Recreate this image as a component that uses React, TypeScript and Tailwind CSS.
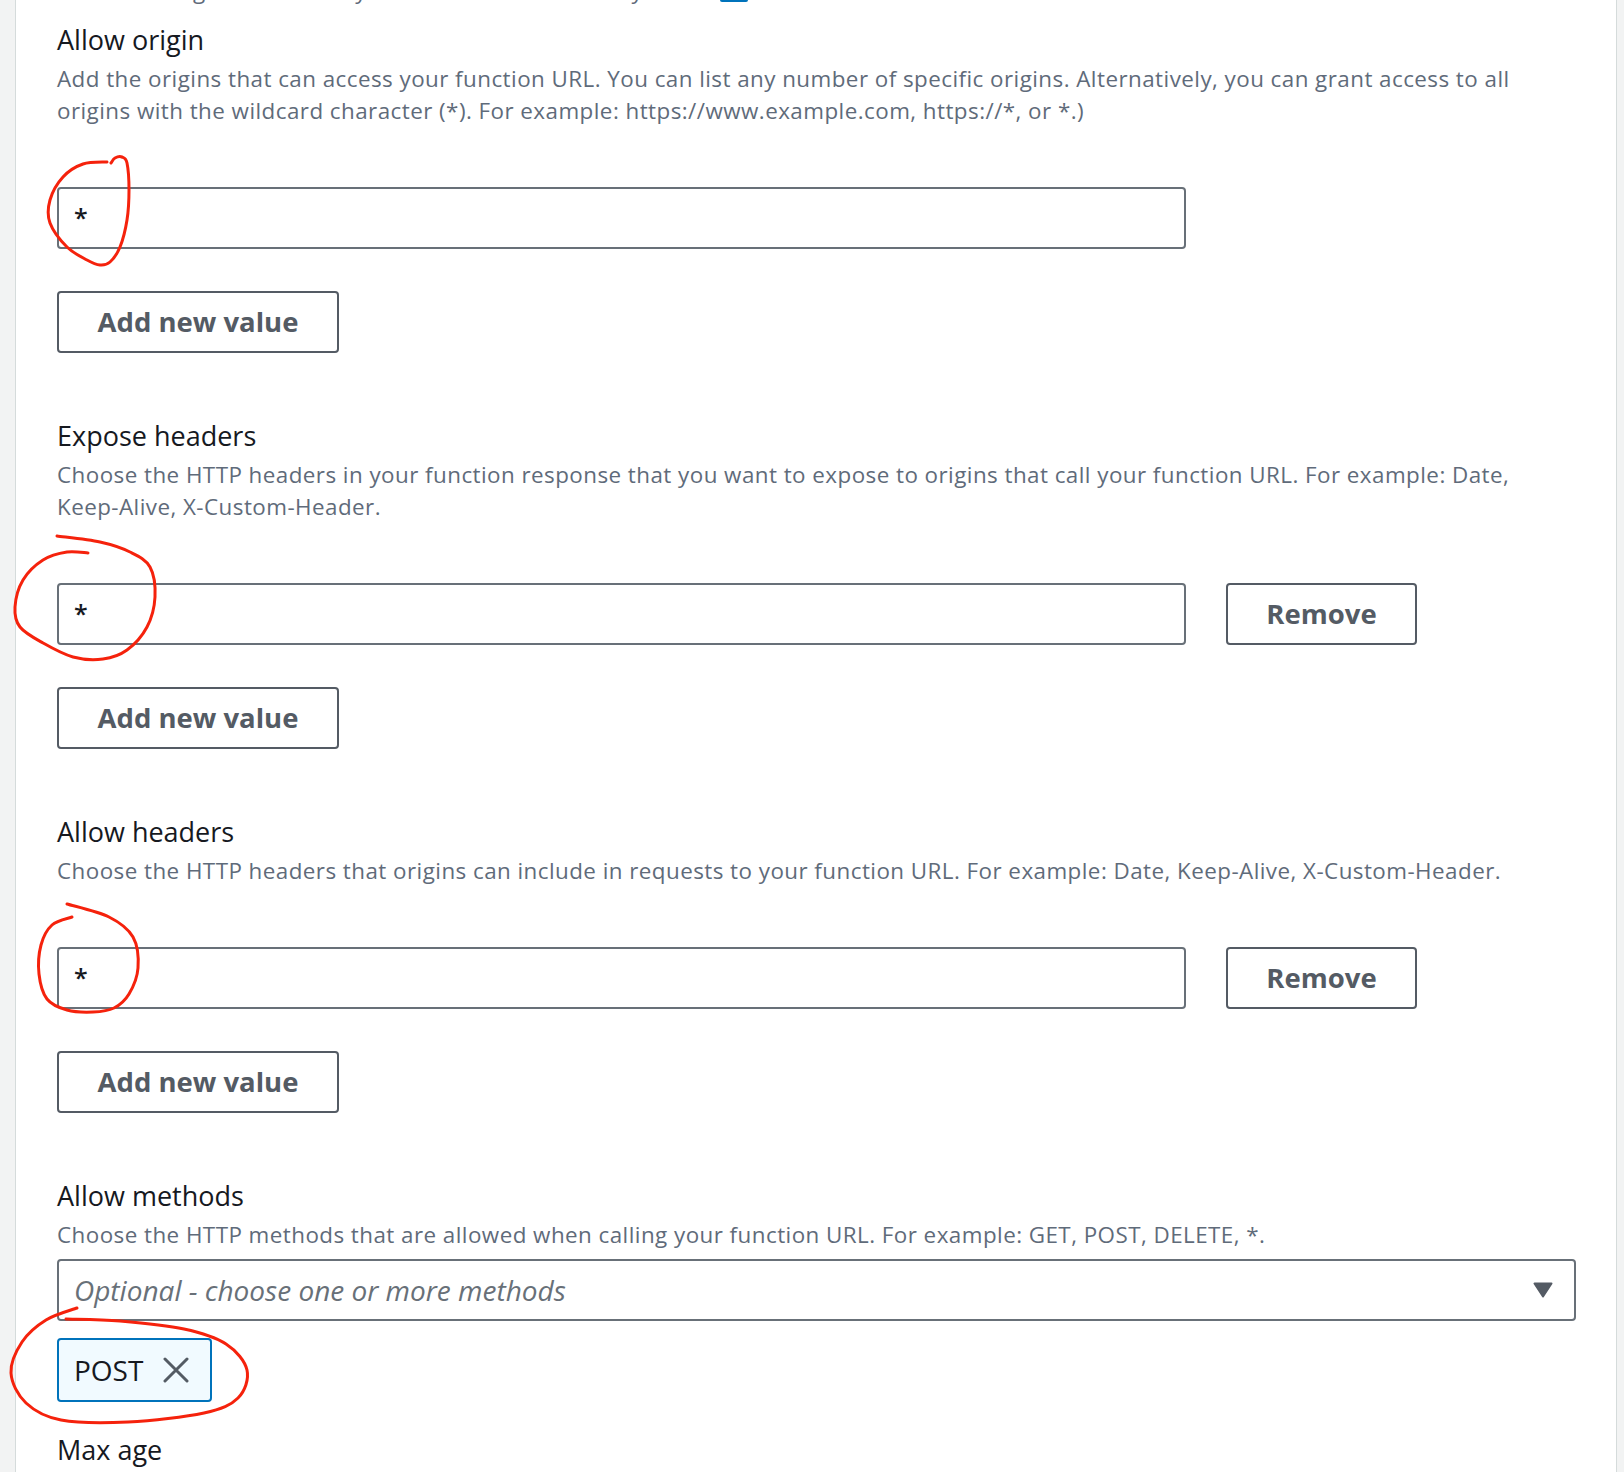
type Pt = [number, number];

// smooth open curve through hand-picked points (catmull-rom -> bezier)
function toPath(pts: Pt[]) {
  let d = `M${pts[0][0]},${pts[0][1]}`;
  for (let i = 0; i < pts.length - 1; i++) {
    const p0 = pts[i - 1] ?? pts[i];
    const p1 = pts[i];
    const p2 = pts[i + 1];
    const p3 = pts[i + 2] ?? p2;
    const c1 = [p1[0] + (p2[0] - p0[0]) / 6, p1[1] + (p2[1] - p0[1]) / 6];
    const c2 = [p2[0] - (p3[0] - p1[0]) / 6, p2[1] - (p3[1] - p1[1]) / 6];
    d += ` C${c1[0]},${c1[1]} ${c2[0]},${c2[1]} ${p2[0]},${p2[1]}`;
  }
  return d;
}

const scribbles: Pt[][] = [
  [[107, 162], [83, 164], [63, 177], [50, 200], [50, 223], [67, 247], [87, 260], [100, 265], [110, 262], [120, 247], [127, 220], [129, 190], [127, 163], [122, 157], [115, 158], [111, 163]],
  [[88, 553], [67, 552], [43, 560], [23, 580], [15, 607], [20, 627], [43, 643], [73, 657], [103, 659], [127, 650], [147, 627], [155, 597], [150, 567], [130, 552], [100, 542], [57, 536]],
  [[67, 904], [109, 917], [133, 937], [138, 968], [129, 994], [114, 1008], [93, 1012], [67, 1010], [47, 999], [39, 974], [41, 945], [52, 925], [72, 917]],
  [[77, 1308], [46, 1320], [22, 1342], [11, 1373], [26, 1403], [61, 1420], [128, 1422], [204, 1413], [238, 1398], [247, 1370], [226, 1344], [184, 1329], [120, 1321], [66, 1319]],
];

function Heading({ children }: { children: React.ReactNode }) {
  return <div className="text-[27px] leading-[36px] text-[#16191f]">{children}</div>;
}

function Desc({ lines }: { lines: string[] }) {
  return (
    <div className="mt-[5px] text-[22.4px] leading-[32px] tracking-[0.45px] text-[#5f6b7a]">
      {lines.map((l) => (
        <div key={l} className="whitespace-nowrap">{l}</div>
      ))}
    </div>
  );
}

function OutlineButton({ label, width }: { label: string; width: string }) {
  return (
    <button
      className={`${width} h-[62px] shrink-0 rounded-[4px] border-2 border-[#545b64] bg-white text-[27.5px] font-bold text-[#545b64]`}
    >
      {label}
    </button>
  );
}

function ValueField({ removable }: { removable?: boolean }) {
  return (
    <>
      <div className="mt-[60px] flex items-center gap-[40px]">
        <div className="flex h-[62px] w-[1129px] items-center rounded-[4px] border-2 border-[#687078] px-[15px] text-[25px] font-semibold text-[#16191f]">
          *
        </div>
        {removable && <OutlineButton label="Remove" width="w-[191px]" />}
      </div>
      <div className="mt-[42px]">
        <OutlineButton label="Add new value" width="w-[282px]" />
      </div>
    </>
  );
}

export default function App() {
  return (
    <div className="relative flex h-[1472px] w-[1624px] overflow-hidden bg-white font-['Open_Sans',sans-serif]">
      <div className="w-[16px] shrink-0 border-r border-[#d5dbdb] bg-[#f2f3f3]" />
      <main className="flex-1 pl-[41px] pr-[40px]">
        {/* tail of the line above, cut by the viewport */}
        <div className="h-[6px] overflow-hidden">
          <div className="-mt-[24px] flex items-start">
            <span className="w-[663px] overflow-hidden whitespace-nowrap text-[22.4px] leading-[30px] text-[#5f6b7a]">
              Use CORS to grant access to your function URL from any domain.
            </span>
            <span className="mt-[12px] h-[14px] w-[28px] rounded-[2px] bg-[#0073bb]" />
          </div>
        </div>

        <div className="mt-[16px]">
          <Heading>Allow origin</Heading>
          <Desc
            lines={[
              'Add the origins that can access your function URL. You can list any number of specific origins. Alternatively, you can grant access to all',
              'origins with the wildcard character (*). For example: https://www.example.com, https://*, or *.)',
            ]}
          />
          <ValueField />
        </div>

        <div className="mt-[65px]">
          <Heading>Expose headers</Heading>
          <Desc
            lines={[
              'Choose the HTTP headers in your function response that you want to expose to origins that call your function URL. For example: Date,',
              'Keep-Alive, X-Custom-Header.',
            ]}
          />
          <ValueField removable />
        </div>

        <div className="mt-[65px]">
          <Heading>Allow headers</Heading>
          <Desc
            lines={[
              'Choose the HTTP headers that origins can include in requests to your function URL. For example: Date, Keep-Alive, X-Custom-Header.',
            ]}
          />
          <ValueField removable />
        </div>

        <div className="mt-[65px]">
          <Heading>Allow methods</Heading>
          <Desc lines={['Choose the HTTP methods that are allowed when calling your function URL. For example: GET, POST, DELETE, *.']} />
          <div className="mt-[8px] flex h-[62px] items-center justify-between rounded-[4px] border-2 border-[#687078] pl-[15px] pr-[21px]">
            <span className="text-[28px] italic text-[#687078]">Optional - choose one or more methods</span>
            <svg width="20" height="16" viewBox="0 0 20 16">
              <path d="M1.5 1.5 H18.5 L10 14.5 Z" fill="#545b64" stroke="#545b64" strokeWidth="2" strokeLinejoin="round" />
            </svg>
          </div>
          <div className="mt-[17px] flex h-[64px] w-[155px] items-center gap-[20px] rounded-[4px] border-2 border-[#0073bb] bg-[#f1faff] pl-[15px]">
            <span className="text-[28px] text-[#16191f]">POST</span>
            <svg width="26" height="26" viewBox="0 0 26 26">
              <path d="M2 2 L24 24 M24 2 L2 24" stroke="#545b64" strokeWidth="3" strokeLinecap="round" />
            </svg>
          </div>
          <div className="mt-[30px]">
            <Heading>Max age</Heading>
          </div>
        </div>
      </main>
      <div className="w-[8px] shrink-0 border-l border-[#d5dbdb] bg-[#f2f3f3]" />

      <svg className="pointer-events-none absolute left-0 top-0" width="1624" height="1472">
        {scribbles.map((s, i) => (
          <path key={i} d={toPath(s)} fill="none" stroke="#f5220c" strokeWidth="3" strokeLinecap="round" strokeLinejoin="round" />
        ))}
      </svg>
    </div>
  );
}
